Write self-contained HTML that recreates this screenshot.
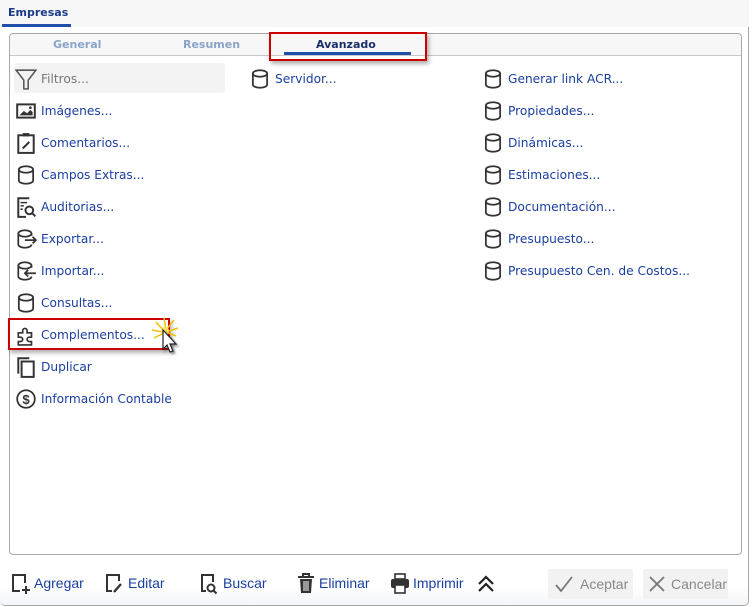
<!DOCTYPE html>
<html><head><meta charset="utf-8">
<style>
*{margin:0;padding:0;box-sizing:border-box}
body{width:752px;height:607px;background:#fff;position:relative;overflow:hidden;font-family:"DejaVu Sans","Liberation Sans",sans-serif}
.top{position:absolute;left:0;top:0;width:749px;height:28px;background:#f7f7f7;border-bottom:1px solid #a8a8a8}
.tabE{position:absolute;left:8px;top:6px;font:bold 11px "DejaVu Sans",sans-serif;color:#1a3a8a}
.tabEl{position:absolute;left:2px;top:24px;width:69px;height:3px;background:#1f4fa8}
.outer{position:absolute;left:0;top:27px;width:749px;height:579px;border-right:1px solid #a8a8a8;border-bottom:1px solid #a8a8a8;border-radius:0 0 5px 5px;background:linear-gradient(#fff 560px,#f3f5f8)}
.panel{position:absolute;left:9px;top:33px;width:733px;height:522px;border:1px solid #a8a8a8;border-radius:4px;background:#fff}
.ph{position:absolute;left:0;top:0;width:100%;height:22px;background:#f7f7f7;border-bottom:1px solid #c8c8c8;border-radius:4px 4px 0 0}
.st{position:absolute;top:4px;font:bold 11px "DejaVu Sans",sans-serif;color:#8aa3c8}
.item{position:absolute;height:24px;display:flex;align-items:center;font-size:12.2px;color:#1a3fa0;white-space:nowrap}
.item svg{width:22px;height:22px;margin-right:4px;flex:none}
.bb{position:absolute;top:571px;display:flex;align-items:center;font:14px "Liberation Sans",sans-serif;color:#1a3fa0}
.bb svg{margin-right:2px}
.btn{position:absolute;top:569px;height:30px;background:#f2f2f2;border-radius:2px;display:flex;align-items:center;font:14px "Liberation Sans",sans-serif;color:#888}
</style></head><body>
<div class="top"></div>
<div class="tabE">Empresas</div>
<div class="tabEl"></div>
<div class="outer"></div>
<div class="panel">
 <div class="ph"></div>
 <div class="st" style="left:43px">General</div>
 <div class="st" style="left:173px">Resumen</div>
 <div class="st" style="left:306px;color:#1a2f6a">Avanzado</div>
 <div style="position:absolute;left:274px;top:18px;width:127px;height:3px;background:#1f4fa8"></div>
</div>
<div style="position:absolute;left:269px;top:32px;width:158px;height:29px;border:2px solid #c00;box-shadow:2px 3px 4px rgba(0,0,0,.3)"></div>
<div style="position:absolute;left:14px;top:63px;width:211px;height:30px;background:#f3f3f3;border-radius:3px"></div>

<svg width="0" height="0" style="position:absolute">
<defs>
<g id="cyl"><ellipse cx="10" cy="5" rx="6.5" ry="3" fill="none" stroke="#333" stroke-width="1.6"/><path d="M3.5 5v10c0 1.7 3 3 6.5 3s6.5-1.3 6.5-3V5" fill="none" stroke="#333" stroke-width="1.6"/></g>
</defs></svg>

<div class="item" style="left:15px;top:67px;color:#777"><svg viewBox="0 0 20 20"><path d="M1 2h18l-7 9v8h-4v-8z" fill="none" stroke="#555" stroke-width="1.4"/></svg>Filtros...</div>
<div class="item" style="left:15px;top:99px"><svg viewBox="0 0 20 20"><rect x="2" y="4" width="16" height="12" fill="none" stroke="#333" stroke-width="1.8"/><path d="M4 14l4-4 3 2 3-3 2 2v3z" fill="#333"/><circle cx="14" cy="7" r="1.2" fill="#333"/></svg>Imágenes...</div>
<div class="item" style="left:15px;top:131px"><svg viewBox="0 0 20 20"><rect x="3" y="3" width="14" height="16" fill="none" stroke="#333" stroke-width="1.8"/><rect x="7" y="1" width="6" height="3" fill="#333"/><path d="M7 15l6-6" stroke="#333" stroke-width="1.8"/></svg>Comentarios...</div>
<div class="item" style="left:15px;top:163px"><svg viewBox="0 0 20 20"><use href="#cyl"/></svg>Campos Extras...</div>
<div class="item" style="left:15px;top:195px"><svg viewBox="0 0 20 20"><path d="M13 2H3v17h7" fill="none" stroke="#333" stroke-width="1.8"/><path d="M5 6h6M5 9h3M5 12h2" stroke="#333" stroke-width="1.4"/><circle cx="13" cy="13" r="3.5" fill="none" stroke="#333" stroke-width="1.8"/><path d="M15.5 15.5l3 3" stroke="#333" stroke-width="1.8"/></svg>Auditorias...</div>
<div class="item" style="left:15px;top:227px"><svg viewBox="0 0 20 20"><path d="M15 7V5c0-1.7-3-3-6-3S3 3.3 3 5v10c0 1.7 3 3 6 3s6-1.3 6-3" fill="none" stroke="#333" stroke-width="1.6"/><path d="M3 5c0 1.7 3 3 6 3s6-1.3 6-3M9 11h10M16 8l3 3-3 3" fill="none" stroke="#333" stroke-width="1.6"/></svg>Exportar...</div>
<div class="item" style="left:15px;top:259px"><svg viewBox="0 0 20 20"><path d="M15 7V5c0-1.7-3-3-6-3S3 3.3 3 5v10c0 1.7 3 3 6 3s6-1.3 6-3" fill="none" stroke="#333" stroke-width="1.6"/><path d="M3 5c0 1.7 3 3 6 3s6-1.3 6-3M9 12h10M12 9l-3 3 3 3" fill="none" stroke="#333" stroke-width="1.6"/></svg>Importar...</div>
<div class="item" style="left:15px;top:291px"><svg viewBox="0 0 20 20"><use href="#cyl"/></svg>Consultas...</div>
<div class="item" style="left:15px;top:323px"><svg viewBox="0 0 20 20"><path d="M3 8h4V6a2 2 0 014 0v2h4v4h-2a2 2 0 000 4h2v3H3v-3h2a2 2 0 000-4H3z" fill="none" stroke="#333" stroke-width="1.5"/></svg>Complementos...</div>
<div class="item" style="left:15px;top:355px"><svg viewBox="0 0 20 20"><path d="M3 16V2h10" fill="none" stroke="#333" stroke-width="1.8"/><rect x="6" y="5" width="11" height="14" fill="none" stroke="#333" stroke-width="1.8"/></svg>Duplicar</div>
<div class="item" style="left:15px;top:387px"><svg viewBox="0 0 20 20"><circle cx="10" cy="10" r="8" fill="none" stroke="#333" stroke-width="1.6"/><text x="10" y="14.5" text-anchor="middle" font-size="12" font-weight="bold" fill="#333" font-family="Liberation Sans">$</text></svg>Información Contable</div>

<div style="position:absolute;left:8px;top:318px;width:162px;height:32px;border:2px solid #c00;box-shadow:2px 3px 4px rgba(0,0,0,.3)"></div>
<svg style="position:absolute;left:148px;top:316px" width="40" height="42" viewBox="0 0 40 42">
<g stroke="#f5c000" stroke-width="1.5"><path d="M16 2l2 12M8 6l8 9M4 14l11 2M6 22l10-5M26 4l-8 10M30 12l-12 4M28 20l-10-4"/></g>
<circle cx="17" cy="15" r="4" fill="#ffe060"/>
<path d="M15 14v19l4-4 3 7 3-1-3-7h6z" fill="#fff" stroke="#222" stroke-width="1.2" style="filter:drop-shadow(2px 2px 1px rgba(0,0,0,.4))"/>
</svg>

<div class="item" style="left:249px;top:67px"><svg viewBox="0 0 20 20"><use href="#cyl"/></svg>Servidor...</div>

<div class="item" style="left:482px;top:67px"><svg viewBox="0 0 20 20"><use href="#cyl"/></svg>Generar link ACR...</div>
<div class="item" style="left:482px;top:99px"><svg viewBox="0 0 20 20"><use href="#cyl"/></svg>Propiedades...</div>
<div class="item" style="left:482px;top:131px"><svg viewBox="0 0 20 20"><use href="#cyl"/></svg>Dinámicas...</div>
<div class="item" style="left:482px;top:163px"><svg viewBox="0 0 20 20"><use href="#cyl"/></svg>Estimaciones...</div>
<div class="item" style="left:482px;top:195px"><svg viewBox="0 0 20 20"><use href="#cyl"/></svg>Documentación...</div>
<div class="item" style="left:482px;top:227px"><svg viewBox="0 0 20 20"><use href="#cyl"/></svg>Presupuesto...</div>
<div class="item" style="left:482px;top:259px"><svg viewBox="0 0 20 20"><use href="#cyl"/></svg>Presupuesto Cen. de Costos...</div>

<div class="bb" style="left:10px"><svg width="22" height="24" viewBox="0 0 22 24"><path d="M10 20H3V4h12v8" fill="none" stroke="#333" stroke-width="2"/><path d="M16 15v8M12 19h8" stroke="#333" stroke-width="2"/></svg>Agregar</div>
<div class="bb" style="left:104px"><svg width="22" height="24" viewBox="0 0 22 24"><path d="M8 20H3V4h12v6" fill="none" stroke="#333" stroke-width="2"/><path d="M10 21l7-8" stroke="#333" stroke-width="2.4"/></svg>Editar</div>
<div class="bb" style="left:199px"><svg width="22" height="24" viewBox="0 0 22 24"><path d="M7 20H3V4h11v7" fill="none" stroke="#333" stroke-width="2"/><circle cx="12" cy="17" r="3.5" fill="none" stroke="#333" stroke-width="2"/><path d="M14.5 19.5l3 3" stroke="#333" stroke-width="2"/></svg>Buscar</div>
<div class="bb" style="left:295px"><svg width="22" height="24" viewBox="0 0 22 24"><path d="M3 6h16M8 6V3h6v3" fill="none" stroke="#333" stroke-width="2"/><path d="M5 8h12l-1 14H6z" fill="#333"/><path d="M9 10v10M11 10v10M13 10v10" stroke="#fff" stroke-width="1"/></svg>Eliminar</div>
<div class="bb" style="left:389px"><svg width="22" height="24" viewBox="0 0 22 24"><rect x="6" y="3" width="10" height="5" fill="none" stroke="#333" stroke-width="1.6"/><rect x="2" y="8" width="18" height="9" rx="2" fill="#333"/><rect x="6" y="14" width="10" height="8" fill="#fff" stroke="#333" stroke-width="1.6"/></svg>Imprimir</div>
<svg style="position:absolute;left:476px;top:574px" width="20" height="20" viewBox="0 0 20 20"><path d="M3 10l7-7 7 7M3 17l7-7 7 7" fill="none" stroke="#222" stroke-width="2.2"/></svg>
<div class="btn" style="left:548px;width:85px"><svg style="margin:0 6px 0 6px" width="20" height="20" viewBox="0 0 20 20"><path d="M2 11l5 6L18 3" fill="none" stroke="#777" stroke-width="1.8"/></svg>Aceptar</div>
<div class="btn" style="left:643px;width:85px"><svg style="margin:0 4px 0 4px" width="20" height="20" viewBox="0 0 20 20"><path d="M3 3l14 14M17 3L3 17" stroke="#777" stroke-width="1.8"/></svg>Cancelar</div>
</body></html>
